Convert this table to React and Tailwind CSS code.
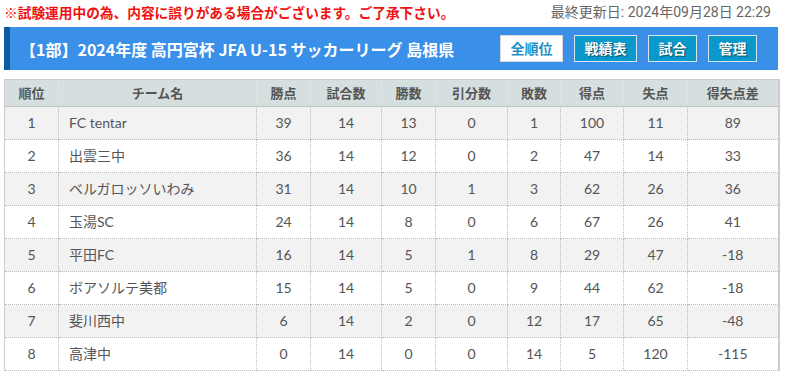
import React from "react";

const rows = [
  [1, "FC tentar", 39, 14, 13, 0, 1, 100, 11, 89],
  [2, "出雲三中", 36, 14, 12, 0, 2, 47, 14, 33],
  [3, "ベルガロッソいわみ", 31, 14, 10, 1, 3, 62, 26, 36],
  [4, "玉湯SC", 24, 14, 8, 0, 6, 67, 26, 41],
  [5, "平田FC", 16, 14, 5, 1, 8, 29, 47, -18],
  [6, "ボアソルテ美都", 15, 14, 5, 0, 9, 44, 62, -18],
  [7, "斐川西中", 6, 14, 2, 0, 12, 17, 65, -48],
  [8, "高津中", 0, 14, 0, 0, 14, 5, 120, -115],
];

const heads = ["順位", "チーム名", "勝点", "試合数", "勝数", "引分数", "敗数", "得点", "失点", "得失点差"];
const widths = ["w-[54px]", "w-[198px]", "w-[54px]", "w-[71px]", "w-[54px]", "w-[72px]", "w-[53px]", "w-[63px]", "w-[64px]", "w-[91px]"];

const jp = { fontFamily: '"Noto Sans CJK JP", "Noto Sans", sans-serif' };
const body = { fontFamily: 'Lato, "Noto Sans CJK JP", sans-serif' };

export default function App() {
  return (
    <div className="w-[785px] h-[376px] bg-white overflow-hidden" style={jp}>
      <div className="h-[27px] flex justify-between pl-[4px] pr-[14px] pt-[3px]">
        <div className="text-[13.7px] leading-[18px] font-bold text-[#f01010]">
          ※試験運用中の為、内容に誤りがある場合がございます。ご了承下さい。
        </div>
        <div className="text-[14px] leading-[18px] text-[#666]" style={{ fontFamily: 'Roboto, "Noto Sans CJK JP", sans-serif' }}>
          最終更新日: 2024年09月28日 22:29
        </div>
      </div>
      <div className="ml-[4px] w-[774px] h-[43px] flex items-center bg-[#3a8fe8] border-l-[6px] border-[#0f5aa0]">
        <div className="flex-1 pl-[10px] text-white font-bold text-[16px] leading-none">
          【1部】2024年度 高円宮杯 JFA U-15 サッカーリーグ 島根県
        </div>
        <div className="flex gap-[11px] pr-[21px]">
          <div className="w-[63px] h-[27px] flex items-center justify-center bg-white border border-[#d8d8d8] text-[#1f8fc4] font-bold text-[14px]">全順位</div>
          <div className="w-[63px] h-[27px] flex items-center justify-center bg-[#0a99cc] border border-[#d6e6ee] text-white font-bold text-[14px]" style={{ textShadow: "1px 1px 1px rgba(0,0,0,0.5)" }}>戦績表</div>
          <div className="w-[49px] h-[27px] flex items-center justify-center bg-[#0a99cc] border border-[#d6e6ee] text-white font-bold text-[14px]" style={{ textShadow: "1px 1px 1px rgba(0,0,0,0.5)" }}>試合</div>
          <div className="w-[49px] h-[27px] flex items-center justify-center bg-[#0a99cc] border border-[#d6e6ee] text-white font-bold text-[14px]" style={{ textShadow: "1px 1px 1px rgba(0,0,0,0.5)" }}>管理</div>
        </div>
      </div>
      <table className="mt-[9px] ml-[4px] w-[774px] table-fixed border-collapse border-t border-l border-r-2 border-[#cccccc] text-[#555]">
        <thead>
          <tr className="h-[27px] bg-[#d5dfdf]">
            {heads.map((h, i) => (
              <th key={i} className={`${widths[i]} p-0 text-[13px] font-bold text-center border-b border-b-[#c4c4c4] border-r border-r-[#e2e8e8] border-dotted`} style={{ borderBottomStyle: "solid" }}>
                {h}
              </th>
            ))}
          </tr>
        </thead>
        <tbody style={body}>
          {rows.map((r, ri) => (
            <tr key={ri} className={`h-[33px] ${ri % 2 === 0 ? "bg-[#f2f2f2]" : "bg-white"}`}>
              {r.map((c, ci) => (
                <td key={ci} className={`p-0 pb-[2px] text-[14px] border border-dotted border-[#bbbbbb] ${ci === 1 ? "text-left pl-[10px]" : "text-center"}`}>
                  {c}
                </td>
              ))}
            </tr>
          ))}
        </tbody>
      </table>
    </div>
  );
}
